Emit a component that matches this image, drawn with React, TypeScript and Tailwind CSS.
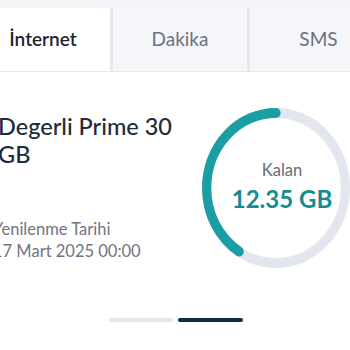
import React from "react";

const tabs = [
  { label: "İnternet", active: true },
  { label: "Dakika", active: false },
  { label: "SMS", active: false },
];

function Gauge({ used }: { used: number }) {
  const r = 75;
  const c = 2 * Math.PI * r;
  return (
    <div className="grid w-[148px] h-[160px] shrink-0">
      <svg
        className="[grid-area:1/1] w-full h-full"
        viewBox="0 0 160 160"
        preserveAspectRatio="none"
      >
        <circle cx="80" cy="80" r={r} fill="none" stroke="#e3e6ee" strokeWidth="10" />
        <circle
          cx="80"
          cy="80"
          r={r}
          fill="none"
          stroke="#1b9ea3"
          strokeWidth="10"
          strokeLinecap="round"
          strokeDasharray={`${used * c} ${c}`}
          transform="translate(160 0) scale(-1 1) rotate(-90 80 80)"
        />
      </svg>
      <div className="[grid-area:1/1] flex flex-col items-center justify-center pb-[4px] pl-[12px]">
        <span className="text-[16.5px] leading-[22px] text-[#666b78]">Kalan</span>
        <span className="text-[24px] leading-[28px] font-bold text-[#138d92] mt-[4px]">12.35 GB</span>
      </div>
    </div>
  );
}

export default function App() {
  return (
    <div className="w-[350px] h-[350px] overflow-hidden bg-white font-['Lato',sans-serif]">
      {/* top strip */}
      <div className="h-[8px] bg-[#f3f4f7]" />

      {/* Tabs */}
      <div className="flex h-[64px] -ml-[24px] border-b border-[#e6e8ee]">
        {tabs.map((t, i) => (
          <div
            key={t.label}
            className={`w-[137px] shrink-0 flex items-center justify-center text-[19px] ${
              t.active ? "bg-white text-[#1f2533] font-semibold" : "bg-[#f5f6f9] text-[#6b7080]"
            } ${i < tabs.length - 1 ? "border-r-[3px] border-[#e6e8ee]" : ""} ${i === 0 ? "w-[135px]" : ""}`}
          >
            {t.label}
          </div>
        ))}
      </div>

      {/* Package content */}
      <div className="flex pt-[36px]">
        <div className="flex-1 -ml-[7px] pt-[4px]">
          <h2 className="ml-[5px] text-[23.5px] leading-[28px] font-medium text-[#222a3b] w-[195px]">
            Degerli Prime 30 GB
          </h2>
          <div className="mt-[50px] text-[16.5px] leading-[22px] text-[#6f7482]">
            <p>Yenilenme Tarihi</p>
            <p>17 Mart 2025 00:00</p>
          </div>
        </div>
        <Gauge used={0.41} />
      </div>

      {/* Pagination */}
      <div className="flex justify-center gap-[5px] mt-[50px] pl-[2px]">
        <div className="w-[64px] h-[4px] rounded-full bg-[#e5e7eb]" />
        <div className="w-[65px] h-[4px] rounded-full bg-[#0f2a4a]" />
      </div>
    </div>
  );
}
